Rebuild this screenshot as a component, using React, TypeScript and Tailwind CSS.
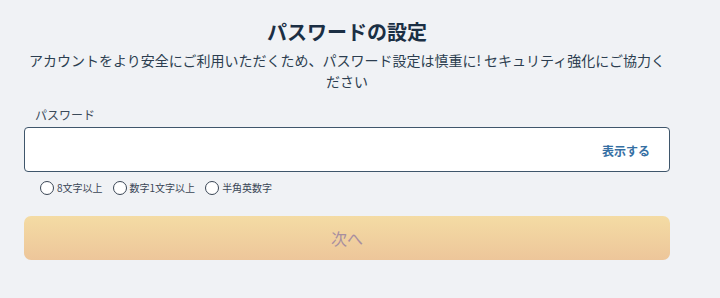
import React, { useState } from 'react';

const font = { fontFamily: '"Noto Sans CJK JP", "Noto Sans", sans-serif' };

const rules = ['8文字以上', '数字1文字以上', '半角英数字'];

export default function App() {
  const [show, setShow] = useState(false);

  return (
    <div className="w-[720px] h-[298px] bg-[#f0f2f5] overflow-hidden" style={font}>
      <div className="w-[646px] ml-6 pt-[18px] flex flex-col">
        <h1 className="text-center text-[20px] leading-[28px] font-bold text-[#1b2f44]">パスワードの設定</h1>
        <p className="mt-[4px] text-center text-[14px] leading-[21px] text-[#2c3e50]">
          アカウントをより安全にご利用いただくため、パスワード設定は慎重に! セキュリティ強化にご協力ください
        </p>

        <label className="mt-[14px] pl-[11px] text-[12px] leading-[18px] text-[#3b4a59]">パスワード</label>
        <div className="mt-[3px] h-[45px] bg-white border border-[#3f566b] rounded-[4px] flex items-center pl-3 pr-[19px]">
          <input
            type={show ? 'text' : 'password'}
            className="flex-1 outline-none text-[14px] bg-transparent"
          />
          <button
            onClick={() => setShow(!show)}
            className="text-[12px] font-bold text-[#356fa3] mt-[2px]"
          >
            表示する
          </button>
        </div>

        <div className="mt-[8px] pl-4 flex items-center gap-[10px]">
          {rules.map((r) => (
            <div key={r} className="flex items-center gap-[3px]">
              <span className="w-[14px] h-[14px] rounded-full border border-[#3a4655] bg-white" />
              <span className="text-[10px] leading-[16px] text-[#3a4655]">{r}</span>
            </div>
          ))}
        </div>

        <button
          disabled
          className="mt-[20px] h-[44px] rounded-[7px] bg-gradient-to-b from-[#f4dca4] to-[#edc69a] text-[16px] text-[#a78ea0]"
        >
          次へ
        </button>
      </div>
    </div>
  );
}
